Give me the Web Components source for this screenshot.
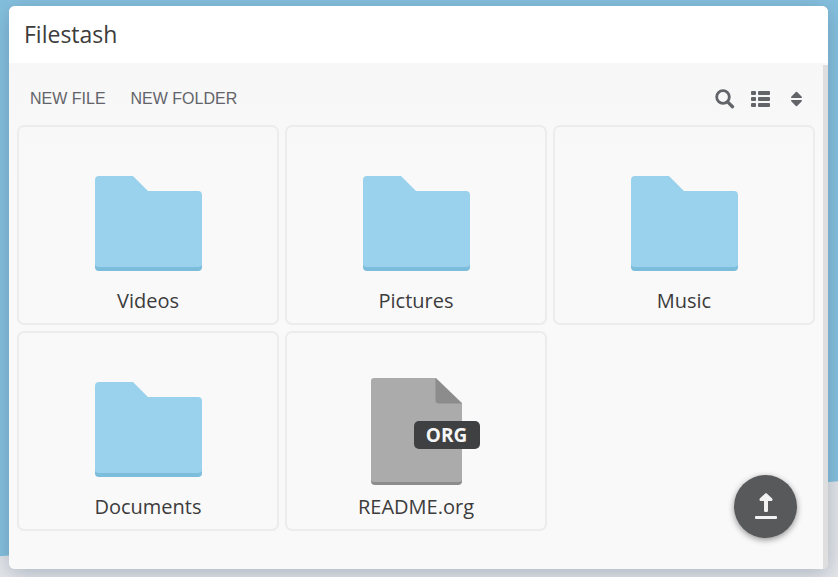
<!DOCTYPE html>
<html lang="en">
<head>
<meta charset="utf-8">
<title>Filestash</title>
<style>
  body {
    margin: 0; min-height: 100vh; box-sizing: border-box; padding: 6px 10px 8px 9px;
    display: flex; overflow: hidden; color: #3c3c3c; position: relative;
    font-family: "Open Sans", "Noto Sans", sans-serif;
    background: #e4e6e9;
  }
  file-window { flex: 1; }
</style>
</head>
<body>
<sky-backdrop></sky-backdrop>
<file-window heading="Filestash">
  <file-toolbar slot="toolbar"></file-toolbar>
  <file-card name="Videos"></file-card>
  <file-card name="Pictures"></file-card>
  <file-card name="Music"></file-card>
  <file-card name="Documents"></file-card>
  <file-card name="README.org" type="ORG"></file-card>
  <upload-button slot="action"></upload-button>
</file-window>
<script>
class Base extends HTMLElement {
  constructor() { super(); this.attachShadow({ mode: "open" }); }
  connectedCallback() { this.shadowRoot.innerHTML = this.render(); }
}

customElements.define("sky-backdrop", class extends Base {
  render() { return `
    <style>
      :host { position: absolute; inset: 0; z-index: -1;
        background: #84c0de; clip-path: polygon(0 0, 100% 0, 100% 83.4%, 0 96.4%); }
    </style>`; }
});

customElements.define("file-window", class extends Base {
  render() { return `
    <style>
      :host { display: flex; flex-direction: column; border-radius: 6px; background: #f9f9f9; position: relative;
        box-shadow: 0 4px 22px rgba(70, 88, 120, .36); }
      header { background: #fff; border-radius: 6px 6px 0 0; padding: 12px 15px 13px; }
      h1 { margin: 0; font-size: 23px; line-height: 32px; font-weight: 400; }
      main { flex: 1; padding: 8px 13px 0 8px; background: linear-gradient(#f7f7f8, #f9f9f9 120px); border-radius: 0 0 6px 6px; }
      .grid { display: grid; grid-template-columns: repeat(3, 1fr); gap: 6px; }
      .track { position: absolute; top: 59px; right: 0; bottom: 0; width: 5px; background: #dedede; border-radius: 0 0 5px 0; }
      .action { position: absolute; right: 31px; bottom: 31px; }
    </style>
    <header><h1>${this.getAttribute("heading")}</h1></header>
    <main>
      <slot name="toolbar"></slot>
      <div class="grid"><slot></slot></div>
    </main>
    <div class="track"></div>
    <div class="action"><slot name="action"></slot></div>`; }
});

customElements.define("file-toolbar", class extends Base {
  render() { return `
    <style>
      :host { display: flex; justify-content: space-between; align-items: center; box-sizing: border-box; height: 54px;
        padding: 2px 8px 0 13px; color: #626469; }
      div { display: flex; align-items: center; }
      .text { gap: 25px; }
      .icons { gap: 16px; }
      button { border: 0; padding: 0; background: none; color: inherit; cursor: pointer;
        font: 16px/24px "Liberation Sans", Arial, sans-serif; }
      .icons button { display: flex; width: 20px; height: 20px; }
      svg { width: 20px; height: 20px; fill: currentColor; }
    </style>
    <div class="text"><button>NEW FILE</button><button>NEW FOLDER</button></div>
    <div class="icons">
      <button aria-label="Search"><svg viewBox="0 0 20 20"><circle cx="8" cy="8" r="6.300" fill="none" stroke="currentColor" stroke-width="2.800"/><path d="M12.600 12.900l4.900 4.800" stroke="currentColor" stroke-width="3.300" stroke-linecap="round"/></svg></button>
      <button aria-label="List view"><svg viewBox="0 0 20 20"><rect x="0" y="2" width="5" height="4" rx="1"/><rect x="7" y="2" width="12" height="4" rx="1"/><rect x="0" y="8" width="5" height="4" rx="1"/><rect x="7" y="8" width="12" height="4" rx="1"/><rect x="0" y="14" width="5" height="4" rx="1"/><rect x="7" y="14" width="12" height="4" rx="1"/></svg></button>
      <button aria-label="Sort"><svg viewBox="0 0 20 20"><path d="M4.600 9q-1-.3-.4-1.300l4.700-4.700q.6-.5 1.200 0l4.700 4.700q.6 1-.4 1.300zM4.600 11q-1 .3-.4 1.300l4.700 4.700q.6.5 1.200 0l4.700-4.700q.6-1-.4-1.300z"/></svg></button>
    </div>`; }
});

const folder = `<svg width="107" height="95" viewBox="0 0 107 95" aria-hidden="true">
  <path fill="#7dbddc" d="M0 80h107v11q0 4-4 4H4q-4 0-4-4z"/>
  <path fill="#9ad1ed" d="M4 0H38L53 15H103q4 0 4 4V88q0 3-4 3H4q-4 0-4-3V4q0-4 4-4z"/></svg>`;
const sheet = `<svg width="91" height="107" viewBox="0 0 91 107" aria-hidden="true">
  <path fill="#8c8c8c" d="M0 90h91v13q0 4-4 4H4q-4 0-4-4z"/>
  <path fill="#ababab" d="M3 0H65L91 25V101q0 3-3 3H3q-3 0-3-3V3q0-3 3-3z"/>
  <path fill="#8c8c8c" d="M64.500 0L91 25.500H68q-3.500 0-3.500-3.500z"/></svg>`;

customElements.define("file-card", class extends Base {
  render() {
    const type = this.getAttribute("type");
    return `
    <style>
      :host { display: block; }
      a { display: flex; flex-direction: column; align-items: center; box-sizing: border-box; height: 200px;
        padding-top: 40px; border: 2px solid #ececec; border-radius: 7px; color: inherit; text-decoration: none; }
      .icon { position: relative; display: flex; height: 112px; align-items: center; }
      .file .icon { height: 116px; }
      svg { display: block; }
      .badge { position: absolute; right: -18px; top: 48px; width: 66px; border-radius: 5px; background: #3e4042;
        color: #f6f6f6; font-size: 19px; line-height: 28px; font-weight: 700; text-align: center; }
      .name { font-size: 20px; line-height: 28px; margin-top: auto; padding-bottom: 8px; }
    </style>
    <a href="#" class="${type ? "file" : "folder"}">
      <span class="icon">${type ? sheet : folder}${type ? `<span class="badge">${type}</span>` : ""}</span>
      <span class="name">${this.getAttribute("name")}</span>
    </a>`; }
});

customElements.define("upload-button", class extends Base {
  render() { return `
    <style>
      button { display: flex; align-items: center; justify-content: center; width: 63px; height: 63px; padding: 0;
        border: 0; border-radius: 50%; background: #58595b; box-shadow: 0 2px 6px rgba(0, 0, 0, .42); cursor: pointer; }
    </style>
    <button aria-label="Upload"><svg width="32" height="32" viewBox="0 0 32 32" fill="#f2f2f2">
      <path d="M15.200 2.400q.8-.7 1.600 0l5.400 5.200q1 2-.7 2.300H18v9.800q0 1.300-1.300 1.300h-1.400q-1.300 0-1.300-1.300V9.900h-3.500q-1.700-.3-.7-2.300z"/>
      <rect x="5" y="25" width="22" height="3" rx="1"/></svg></button>`; }
});
</script>
</body>
</html>
